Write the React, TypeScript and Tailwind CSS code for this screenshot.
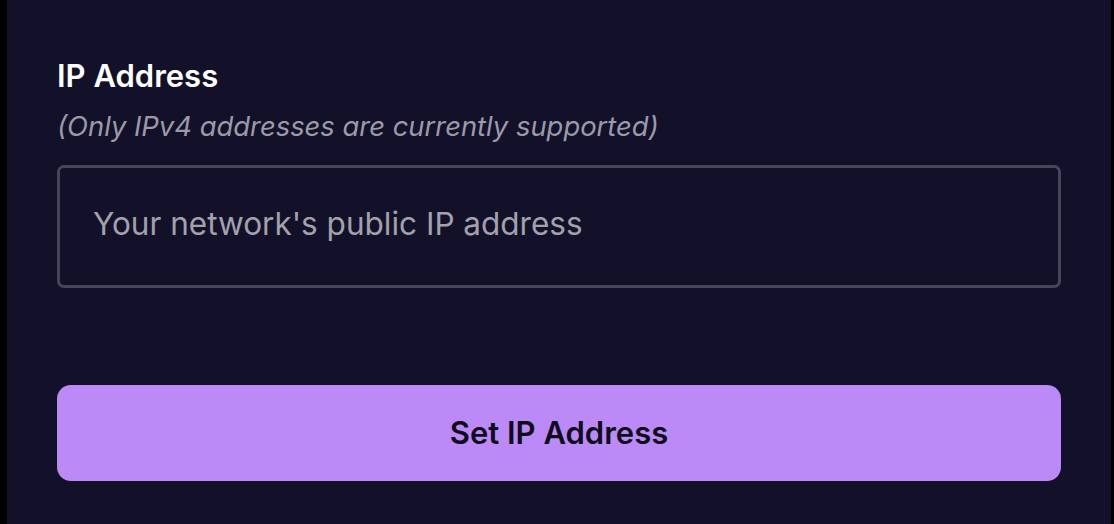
export default function App() {
  return (
    <div className="flex h-[524px] w-full bg-black" style={{ fontFamily: 'Inter, "Noto Sans", sans-serif' }}>
      <div className="ml-[7px] mr-[3px] flex-1 bg-[#13112a] px-[50px] pt-[56px]">
        <h2 className="text-[31px] font-semibold leading-[40px] text-white">IP Address</h2>
        <p className="mt-[13px] text-[27.4px] italic leading-[34px] text-[#9c99a9]">
          (Only IPv4 addresses are currently supported)
        </p>
        <div className="mt-[22px] flex h-[123px] items-center rounded-[7px] border-[3px] border-[#48445c] px-[33px]">
          <input
            className="mb-[6px] w-full bg-transparent text-[31.5px] text-white outline-none placeholder:text-[#a3a1ab]"
            placeholder="Your network's public IP address"
          />
        </div>
        <button className="mt-[97px] flex h-[96px] w-full items-center justify-center rounded-[14px] bg-[#bb8af7] text-[31px] font-semibold text-[#0f0c1c]">
          Set IP Address
        </button>
      </div>
    </div>
  );
}
